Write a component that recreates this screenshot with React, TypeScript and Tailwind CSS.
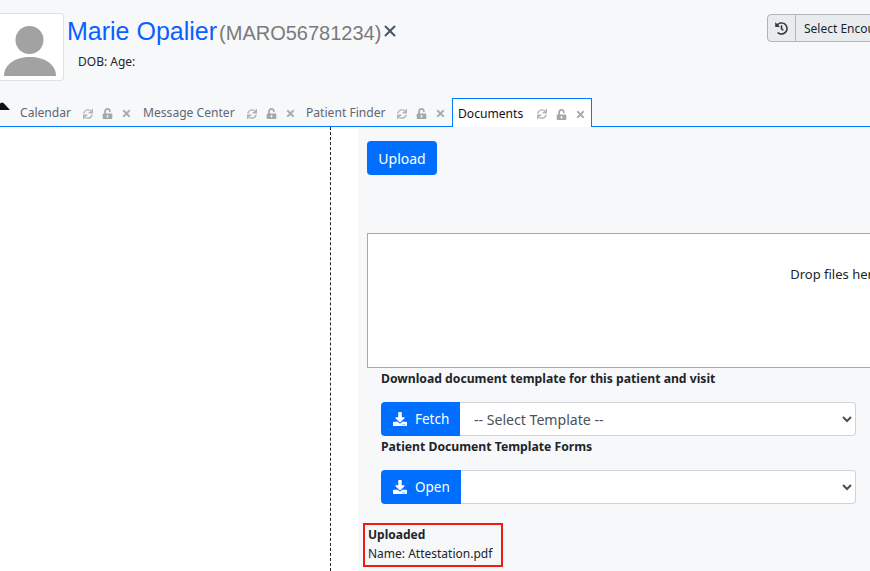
import React from "react";
import { FaSync, FaUnlockAlt, FaTimes, FaHistory, FaDownload } from "react-icons/fa";
import { X } from "lucide-react";

function Tab({ label, w, active }: { label: string; w: string; active?: boolean }) {
  return (
    <div
      className={
        active
          ? "flex h-[29px] items-center pl-[5px] pt-[2px] bg-white border border-b-0 border-[#007bff] text-[#111] w-[140px] -mb-px whitespace-nowrap"
          : "flex h-[28px] items-center pt-[3px] text-[#5f6770] whitespace-nowrap"
      }
    >
      <span className={w}>{label}</span>
      <FaSync className="text-[#b0b4b9] text-[10px] ml-[12px] mr-[9px]" />
      <FaUnlockAlt className="text-[#a4a7aa] text-[11px] mr-[8px]" />
      <FaTimes className="text-[#a9adb2] text-[11px]" />
    </div>
  );
}

function TemplateRow({ icon, w, value }: { icon: string; w: string; value?: string }) {
  return (
    <div className="flex h-[34px] w-[475px] ml-[23px]">
      <button className={`${w} h-[34px] shrink-0 bg-[#006fff] text-white rounded-l-[4px] flex items-center pl-[12px] gap-[8px] text-[13.5px]`}>
        <FaDownload className="text-[14px]" />
        {icon}
      </button>
      <select
        defaultValue={value ?? ""}
        className="flex-1 h-[34px] bg-white border border-[#ced4da] border-l-0 rounded-r-[4px] pl-[10px] pr-[2px] text-[14.1px] text-[#495057]"
      >
        <option value="">{value ?? ""}</option>
      </select>
    </div>
  );
}

export default function App() {
  return (
    <div className="w-[870px] h-[571px] overflow-hidden bg-[#f7f8fa] text-[#212529] font-['Noto_Sans',sans-serif] text-[12px]">
      <div className="w-[1400px]">
        <div className="flex h-[98px] items-start">
          <div className="w-[64px] h-[68px] mt-[13px] bg-white border border-[#dee2e6] rounded-r-[4px] border-l-0 shrink-0">
            <svg viewBox="0 0 64 68" className="w-[64px] h-[68px]">
              <circle cx="29.5" cy="26" r="14" fill="#a2a2a2" />
              <path d="M4 62 C4 50 16 43 30 43 C44 43 56 50 56 62 Z" fill="#a2a2a2" />
            </svg>
          </div>
          <div className="w-[703px] pl-[3px] shrink-0">
            <div className="flex items-baseline mt-[13px] h-[36px] font-['Liberation_Sans',sans-serif]">
              <span className="text-[25px] text-[#0a60ff] leading-[36px]">Marie Opalier</span>
              <span className="text-[20px] text-[#7a7a7a] ml-[2px]">(MARO56781234)</span>
              <X size={18} strokeWidth={2.6} className="text-[#44566c] self-center" />
            </div>
            <div className="mt-[4px] ml-[11px] text-[12px] leading-[18px] text-[#212529]">DOB: Age:</div>
          </div>
          <div className="flex mt-[14px] h-[28px] border border-[#adb5bd] rounded-[4px] bg-[#e9ecef] text-[12px] items-center shrink-0">
            <div className="w-[28px] h-full flex items-center justify-center border-r border-[#adb5bd]">
              <FaHistory className="text-[#343a40] text-[13px]" />
            </div>
            <span className="px-[8px] pt-[1px]">Select Encounter</span>
          </div>
        </div>
        <div className="flex h-[29px] items-end border-b border-[#007bff] relative text-[12.1px]">
          <svg viewBox="0 0 16 8" className="absolute left-[-6px] top-[4px] w-[16px] h-[8px]">
            <path d="M0 8 L6.5 1 Q8 0 9.5 1 L16 8 Z" fill="#111" />
          </svg>
          <div className="flex items-center pl-[20px]">
            <Tab label="Calendar" w="w-[51px]" />
            <div className="w-[11px]" />
            <Tab label="Message Center" w="w-[92px]" />
            <div className="w-[10px]" />
            <Tab label="Patient Finder" w="w-[79px]" />
            <div className="w-[6px]" />
          </div>
          <Tab label="Documents" w="w-[67px]" active />
        </div>
        <div className="flex h-[444px]">
          <div className="w-[358px] bg-white shrink-0 flex">
            <div className="w-[331px] border-r border-dashed border-[#222]" />
          </div>
          <div className="flex-1">
            <button className="ml-[9px] mt-[14px] w-[70px] h-[34px] bg-[#006fff] text-white rounded-[4px] text-[14px]">Upload</button>
            <div className="ml-[9px] mt-[58px] w-[998px] h-[135px] bg-white border border-[#a9a9a9] flex items-start justify-center pt-[31px] text-[13px] text-[#212529]">
              Drop files here to upload
            </div>
            <div className="ml-[23px] pt-[1px] font-bold text-[12.2px] leading-[20px] h-[34px]">Download document template for this patient and visit</div>
            <TemplateRow icon="Fetch" w="w-[79px]" value="-- Select Template --" />
            <div className="ml-[23px] pt-[1px] font-bold text-[12.2px] leading-[20px] h-[34px]">Patient Document Template Forms</div>
            <TemplateRow icon="Open" w="w-[80px]" />
            <div className="ml-[5px] mt-[19px] w-[140px] h-[44px] border-2 border-[#ee1c14] pl-[3px] text-[12px] leading-[19px] text-[#212529]">
              <div className="font-bold">Uploaded</div>
              <div>Name: Attestation.pdf</div>
            </div>
          </div>
        </div>
      </div>
    </div>
  );
}
